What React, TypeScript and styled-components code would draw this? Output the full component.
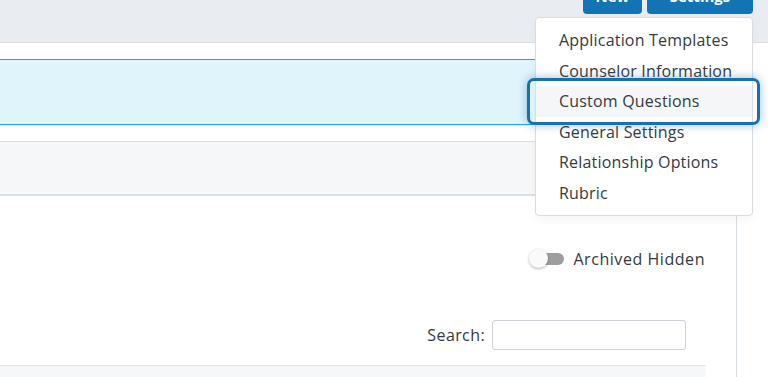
import React from "react";
import styled, { createGlobalStyle } from "styled-components";

const GlobalStyle = createGlobalStyle`
  html, body {
    margin: 0;
    padding: 0;
    background: #e9edf2;
    font-family: "Open Sans", "Noto Sans", sans-serif;
    color: #333a40;
  }
  * { box-sizing: border-box; }
`;

const Page = styled.div`
  position: relative;
  width: 768px;
  height: 377px;
  overflow: hidden;
  background: #e9edf2;
  display: flex;
  flex-direction: column;
`;

const TopBar = styled.div`
  flex-shrink: 0;
  height: 42px;
  display: flex;
  justify-content: flex-end;
  align-items: flex-end;
  gap: 5px;
  padding: 0 15px 28px 0;
`;

const TopButton = styled.button<{ $width: number }>`
  width: ${(p) => p.$width}px;
  height: 36px;
  margin-top: -22px;
  border: 0;
  border-radius: 4px;
  background: #1274b5;
  color: #fff;
  font-family: inherit;
  font-weight: 700;
  font-size: 15px;
  line-height: 20px;
  padding: 0;
`;

const Card = styled.div`
  flex: 1;
  display: flex;
  background: #fff;
  border-top: 1px solid #dcdfe4;
  min-height: 0;
`;

const Main = styled.div`
  width: 737px;
  border-right: 1px solid #d6dde3;
  display: flex;
  flex-direction: column;
  & > * {
    flex-shrink: 0;
  }
`;

const SideStrip = styled.div`
  width: 16px;
  background: #fff;
`;

const HighlightRow = styled.div`
  margin-top: 16px;
  height: 66px;
  background: #e0f4fc;
  border-top: 1px solid #14a9ef;
  border-bottom: 1px solid #14a9ef;
`;

const ToolBand = styled.div`
  margin-top: 16px;
  height: 55px;
  background: #f6f7f9;
  border-top: 1px solid #dadee3;
  border-bottom: 2px solid #d7dee4;
`;

const Body = styled.div`
  display: flex;
  flex-direction: column;
  padding-top: 53px;
  & > * {
    flex-shrink: 0;
  }
`;

const ToggleRow = styled.div`
  display: flex;
  justify-content: flex-end;
  align-items: center;
  gap: 9px;
  height: 20px;
  padding-right: 31px;
  font-size: 16px;
  letter-spacing: 0.55px;
`;

const Switch = styled.span`
  position: relative;
  width: 35px;
  height: 20px;
  display: inline-block;
  &::before {
    content: "";
    position: absolute;
    left: 3px;
    right: 0;
    top: 4px;
    height: 12px;
    border-radius: 6px;
    background: #9e9e9e;
  }
  &::after {
    content: "";
    position: absolute;
    left: 0;
    top: 0;
    width: 19px;
    height: 19px;
    border-radius: 50%;
    background: #fafafa;
    box-shadow: 0 1px 3px rgba(0, 0, 0, 0.3);
  }
`;

const SearchRow = styled.label`
  margin-top: 51px;
  display: flex;
  justify-content: flex-end;
  align-items: center;
  gap: 7px;
  padding-right: 50px;
  font-size: 16px;
  letter-spacing: 0.4px;
`;

const SearchInput = styled.input`
  width: 194px;
  height: 30px;
  border: 1px solid #cdd1d8;
  border-radius: 3px;
  background: #fff;
  outline: none;
`;

const TableHead = styled.div`
  margin-top: 15px;
  width: 706px;
  height: 20px;
  background: #f6f7f9;
  border-top: 1px solid #dfe2e6;
`;

const Dropdown = styled.ul`
  position: absolute;
  top: 17px;
  right: 15px;
  width: 218px;
  margin: 0;
  padding: 7px 0;
  list-style: none;
  background: #fff;
  border: 1px solid #d9dde2;
  border-radius: 4px;
  box-shadow: 0 4px 10px rgba(0, 0, 0, 0.04);
`;

const MenuItem = styled.li<{ $focused?: boolean }>`
  position: relative;
  height: 30.5px;
  line-height: 31.5px;
  padding-left: 23px;
  font-size: 16px;
  letter-spacing: 0.2px;
  color: #353a40;
  white-space: nowrap;
  background: ${(p) => (p.$focused ? "#f5f6f8" : "transparent")};
  ${(p) =>
    p.$focused &&
    `
    &::after {
      content: "";
      position: absolute;
      top: -8px;
      bottom: -8px;
      left: -9px;
      right: -8px;
      border: 3px solid #1a70ab;
      border-radius: 7px;
      box-shadow: 0 0 10px rgba(26, 112, 171, 0.45);
    }
  `}
`;

const items = [
  "Application Templates",
  "Counselor Information",
  "Custom Questions",
  "General Settings",
  "Relationship Options",
  "Rubric",
];

export default function App() {
  return (
    <Page>
      <GlobalStyle />
      <TopBar>
        <TopButton $width={59}>New</TopButton>
        <TopButton $width={106}>Settings</TopButton>
      </TopBar>
      <Card>
        <Main>
          <HighlightRow />
          <ToolBand />
          <Body>
            <ToggleRow>
              <Switch />
              <span>Archived Hidden</span>
            </ToggleRow>
            <SearchRow>
              Search:
              <SearchInput type="search" />
            </SearchRow>
            <TableHead />
          </Body>
        </Main>
        <SideStrip />
      </Card>
      <Dropdown>
        {items.map((label) => (
          <MenuItem key={label} $focused={label === "Custom Questions"}>
            {label}
          </MenuItem>
        ))}
      </Dropdown>
    </Page>
  );
}
